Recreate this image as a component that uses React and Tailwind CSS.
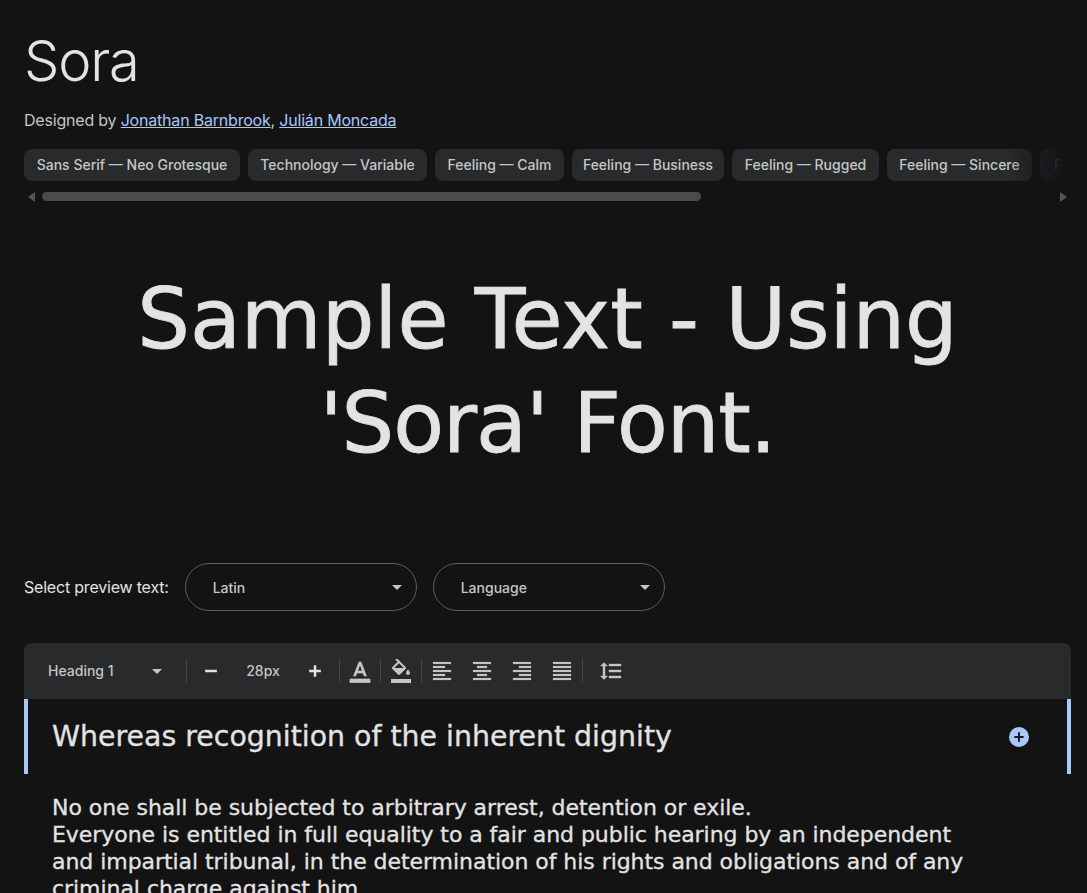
import React from "react";

const tags = [
  ["Sans Serif — Neo Grotesque", "w-[216px]"],
  ["Technology — Variable", "w-[179px]"],
  ["Feeling — Calm", "w-[129px]"],
  ["Feeling — Business", "w-[152px]"],
  ["Feeling — Rugged", "w-[147px]"],
  ["Feeling — Sincere", "w-[145px]"],
  ["Feeling — Active", "w-[140px]"],
];

const ui = "font-['Inter','Liberation_Sans',sans-serif]";
const sora = "font-['DejaVu_Sans','Noto_Sans',sans-serif]";

function Icon({ d, children, className = "w-6 h-6", stroke = 0 }) {
  return (
    <svg viewBox="0 0 24 24" fill="currentColor" stroke="currentColor" strokeWidth={stroke} className={className}>
      {d && <path d={d} />}
      {children}
    </svg>
  );
}

function Caret({ className = "" }) {
  return <span className={`w-0 h-0 border-x-[5px] border-x-transparent border-t-[5px] border-t-[#c4c7c5] ${className}`} />;
}

function Divider() {
  return <span className="w-px h-6 bg-[#444746]" />;
}

function PillSelect({ label }) {
  return (
    <div className="w-[232px] h-12 rounded-3xl border border-[#5b5e5d] flex items-center justify-between pl-[27px] pr-[14px]">
      <span className={`pt-px text-sm font-medium text-[#c4c7c5] ${ui}`}>{label}</span>
      <Caret />
    </div>
  );
}

const alignPaths = [
  "M15 15H3v2h12v-2zm0-8H3v2h12V7zM3 13h18v-2H3v2zm0 8h18v-2H3v2zM3 3v2h18V3H3z",
  "M7 15v2h10v-2H7zm-4 6h18v-2H3v2zm0-8h18v-2H3v2zm4-6v2h10V7H7zM3 3v2h18V3H3z",
  "M3 21h18v-2H3v2zm6-4h12v-2H9v2zm-6-4h18v-2H3v2zm6-4h12V7H9v2zM3 3v2h18V3H3z",
  "M3 21h18v-2H3v2zm0-4h18v-2H3v2zm0-4h18v-2H3v2zm0-4h18V7H3v2zm0-6v2h18V3H3z",
];

const minusPath = "M5 10.5h14v3H5z";
const plusPath = "M10.5 5h3v5.5H19v3h-5.5V19h-3v-5.5H5v-3h5.5z";

export default function App() {
  return (
    <div className={`h-[893px] w-[1087px] overflow-hidden bg-[#131314] text-[#e3e3e3] pl-6 pr-4 ${ui}`}>
      <h1 className="text-[56px] leading-[64px] font-[350] pt-[29px] tracking-[-1.2px]">Sora</h1>
      <p className="mt-[15px] text-base leading-6 text-[#c4c7c5] tracking-[-0.2px]">
        Designed by{" "}
        <a href="#" className="text-[#a8c7fa] underline">Jonathan Barnbrook</a>,{" "}
        <a href="#" className="text-[#a8c7fa] underline">Julián Moncada</a>
      </p>

      {/* tag chips */}
      <div className="relative mt-[17px] overflow-hidden -mr-4">
        <div className="flex gap-2 w-max">
          {tags.map(([t, w]) => (
            <span key={t} className={`h-8 ${w} flex items-center justify-center rounded-lg bg-[#282a2c] text-sm font-medium text-[#c4c7c5]`}>
              {t}
            </span>
          ))}
        </div>
        <div className="absolute inset-y-0 right-0 w-20 bg-gradient-to-r from-transparent to-[#131314] to-70%" />
      </div>
      <div className="mt-[11px] h-[9px] flex items-center -mr-4 pr-5">
        <span className="ml-1 w-0 h-0 border-y-[5px] border-y-transparent border-r-[7px] border-r-[#555656]" />
        <div className="ml-[7px] w-[659px] h-[9px] rounded-full bg-[#4a4b4b]" />
        <span className="ml-auto w-0 h-0 border-y-[5px] border-y-transparent border-l-[7px] border-l-[#555656]" />
      </div>

      {/* sample */}
      <div className={`mt-[67px] text-center text-[83px] leading-[104px] text-[#e3e3e3] [-webkit-text-stroke:0.8px_#e3e3e3] ${sora}`}>
        Sample Text - Using
        <br />
        <span className="tracking-[-1px]">'Sora' Font.</span>
      </div>

      <div className="mt-[87px] flex items-center gap-4">
        <span className="text-base text-[#e3e3e3] tracking-[-0.2px]">Select preview text:</span>
        <PillSelect label="Latin" />
        <PillSelect label="Language" />
      </div>

      {/* editor toolbar */}
      <div className="mt-8 h-14 rounded-t-lg bg-[#282a2c] flex items-center text-[#c4c7c5]">
        <div className="w-[162px] pl-6 pr-6 flex items-center justify-between">
          <span className="text-sm font-medium">Heading 1</span>
          <Caret />
        </div>
        <Divider />
        <div className="w-[152px] flex items-center justify-between pl-[14px] pr-[14px]">
          <Icon className="w-5 h-5 text-[#e3e3e3]" d={minusPath} />
          <span className="text-sm font-medium">28px</span>
          <Icon className="w-5 h-5 text-[#e3e3e3]" d={plusPath} />
        </div>
        <Divider />
        <div className="w-10 flex justify-center">
          <Icon stroke={0.7}>
            <path d="M2 20h20v3.5H2z" />
            <path d="M11 3L5.5 17h2.25l1.12-3h6.25l1.12 3h2.25L13 3h-2zm-1.38 9L12 5.67 14.38 12H9.62z" />
          </Icon>
        </div>
        <Divider />
        <div className="w-10 flex justify-center">
          <Icon>
            <path d="M16.56 8.94L7.62 0 6.21 1.41l2.38 2.38-5.15 5.15c-.59.59-.59 1.54 0 2.12l5.5 5.5c.29.29.68.44 1.06.44s.77-.15 1.06-.44l5.5-5.5c.59-.58.59-1.53 0-2.12zM5.21 10L10 5.21 14.79 10H5.21zM19 11.5s-2 2.17-2 3.5c0 1.1.9 2 2 2s2-.9 2-2c0-1.33-2-3.5-2-3.5z" transform="translate(0 -1)" />
            <path d="M5.2 9h9.6L10 14z" />
            <path d="M2 20h20v4H2z" />
          </Icon>
        </div>
        <Divider />
        {alignPaths.map((d) => (
          <div key={d} className="w-10 flex justify-center">
            <Icon d={d} stroke={0.2} />
          </div>
        ))}
        <Divider />
        <div className="w-[56px] flex justify-center">
          <Icon stroke={0.4} d="M6 7h2.5L5 3.5 1.5 7H4v10H1.5L5 20.5 8.5 17H6V7zm4-2v2h12V5H10zm0 14h12v-2H10v2zm0-6h12v-2H10v2z" />
        </div>
      </div>

      {/* active heading row */}
      <div className="h-[75px] flex items-center justify-between border-x-4 border-[#a8c7fa] pl-6 pr-[38px]">
        <span className={`text-[28.4px] leading-9 [-webkit-text-stroke:0.3px_#e3e3e3] ${sora}`}>Whereas recognition of the inherent dignity</span>
        <span className="w-5 h-5 rounded-full bg-[#a8c7fa] flex items-center justify-center text-[#1b1a2e]">
          <Icon className="w-4 h-4" d={plusPath} />
        </span>
      </div>

      <div className={`mt-5 pl-7 w-[960px] text-[22px] leading-[27px] tracking-[-0.05px] [-webkit-text-stroke:0.3px_#e3e3e3] ${sora}`}>
        No one shall be subjected to arbitrary arrest, detention or exile.
        <br />
        Everyone is entitled in full equality to a fair and public hearing by an independent and impartial tribunal, in the determination of his rights and obligations and of any criminal charge against him.
      </div>
    </div>
  );
}
